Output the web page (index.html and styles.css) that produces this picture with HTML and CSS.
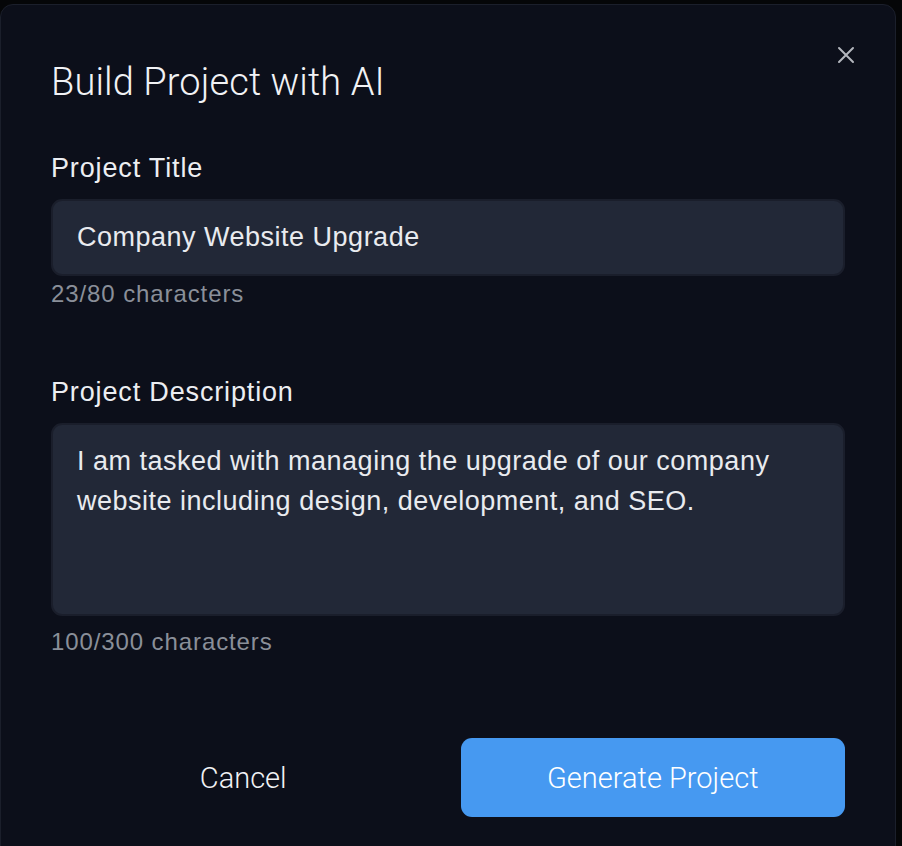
FILE: index.html
```html
<!DOCTYPE html>
<html lang="en">
<head>
  <meta charset="utf-8">
  <title>Build Project with AI</title>
  <meta name="viewport" content="width=device-width, initial-scale=1.0">
  <link rel="stylesheet" href="styles.css">
</head>
<body>
<main class="modal">
  <button class="close" aria-label="Close">
    <svg width="18" height="18" viewBox="0 0 18 18" fill="none" stroke="currentColor" stroke-width="2" stroke-linecap="round">
      <path d="M2 2 L16 16 M16 2 L2 16"/>
    </svg>
  </button>

  <h1 class="title">Build Project with AI</h1>

  <form class="form">
    <label class="field">
      <span class="label">Project Title</span>
      <span class="input">Company Website Upgrade</span>
      <span class="count">23/80 characters</span>
    </label>

    <label class="field field-desc">
      <span class="label">Project Description</span>
      <span class="textarea">I am tasked with managing the upgrade of our company website including design, development, and SEO.</span>
      <span class="count count-desc">100/300 characters</span>
    </label>

    <div class="actions">
      <button type="button" class="btn btn-cancel">Cancel</button>
      <button type="button" class="btn btn-primary">Generate Project</button>
    </div>
  </form>
</main>
</body>
</html>
```

FILE: styles.css
```css
html {
  box-sizing: border-box;
}

*, *:before, *:after {
  box-sizing: inherit;
}

body {
  margin: 0;
  background: #050608;
  font-family: 'Liberation Sans', Arial, sans-serif;
  height: 846px;
  overflow: hidden;
}

.modal {
  position: relative;
  margin-top: 4px;
  width: 896px;
  height: 860px;
  background: #0c0f1a;
  border: 1px solid #1b1f2b;
  border-radius: 13px;
  padding: 54px 50px 0 50px;
}

.close {
  position: absolute;
  top: 41px;
  right: 40px;
  width: 18px;
  height: 18px;
  padding: 0;
  border: 0;
  background: none;
  color: #b3b6bd;
  display: flex;
}

.title {
  margin: 0;
  font-family: Roboto, 'Liberation Sans', sans-serif;
  font-weight: 300;
  font-size: 38px;
  line-height: 46px;
  color: #f1f2f5;
  letter-spacing: 0.1px;
}

.form {
  display: flex;
  flex-direction: column;
}

.field {
  display: flex;
  flex-direction: column;
}

.label {
  margin-top: 47px;
  font-size: 27px;
  line-height: 32px;
  color: #eceef2;
  letter-spacing: 0.85px;
}

.field-desc .label {
  margin-top: 68px;
}

.input,
.textarea {
  margin-top: 15px;
  background: #222837;
  border: 2px solid #1a1e2b;
  border-radius: 11px;
  color: #e9ebef;
  font-size: 27px;
  letter-spacing: 0.5px;
  padding: 0 24px;
}

.input {
  height: 77px;
  display: flex;
  align-items: center;
}

.textarea {
  height: 193px;
  padding-top: 16px;
  line-height: 40px;
}

.count {
  margin-top: 4px;
  font-size: 24px;
  line-height: 28px;
  color: #8a8f99;
  letter-spacing: 0.9px;
}

.count-desc {
  margin-top: 12px;
}

.actions {
  margin-top: 82px;
  display: grid;
  grid-template-columns: 1fr 1fr;
  gap: 25px;
}

.btn {
  height: 79px;
  border: 0;
  border-radius: 11px;
  font-family: Roboto, 'Liberation Sans', sans-serif;
  font-weight: 300;
  font-size: 29px;
  cursor: pointer;
}

.btn-cancel {
  background: none;
  color: #f1f2f5;
}

.btn-primary {
  background: #4699f1;
  color: #ffffff;
}
```
